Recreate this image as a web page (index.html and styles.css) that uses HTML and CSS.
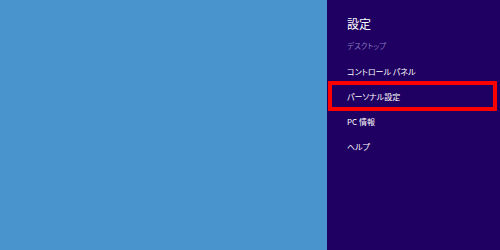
FILE: index.html
```html
<!DOCTYPE html>
<html lang="ja">
<head>
<meta charset="utf-8">
<link rel="stylesheet" href="styles.css">
</head>
<body>
<div class="screen">
  <div class="desktop"></div>
  <aside class="charm">
    <h1 class="title">設定</h1>
    <div class="context">デスクトップ</div>
    <ul class="menu">
      <li class="item">コントロール パネル</li>
      <li class="item selected">パーソナル設定</li>
      <li class="item">PC 情報</li>
      <li class="item">ヘルプ</li>
    </ul>
  </aside>
</div>
</body>
</html>
```
FILE: styles.css
```css
html, body {
  margin: 0;
  padding: 0;
}
body {
  width: 500px;
  height: 250px;
  overflow: hidden;
  font-family: "Noto Sans CJK JP", "Noto Sans", sans-serif;
  font-feature-settings: "palt";
}
.screen {
  display: flex;
  width: 500px;
  height: 250px;
}
.desktop {
  width: 327px;
  background: #4a94cd;
}
.charm {
  flex: 1;
  background: #1f0062;
  color: #ffffff;
  display: flex;
  flex-direction: column;
}
.title {
  margin: 15px 0 0 20px;
  font-size: 12px;
  font-weight: normal;
  line-height: 18px;
}
.context {
  margin: 7px 0 0 20px;
  font-size: 7.5px;
  line-height: 12px;
  color: #8479bb;
}
.menu {
  list-style: none;
  margin: 7px 0 0 0;
  padding: 0;
}
.item {
  position: relative;
  padding-left: 20px;
  height: 25px;
  line-height: 25px;
  font-size: 8px;
}
.selected::after {
  content: "";
  position: absolute;
  left: 1px;
  right: 3px;
  top: -3px;
  bottom: -2px;
  border: 4px solid #ff0000;
}
```
